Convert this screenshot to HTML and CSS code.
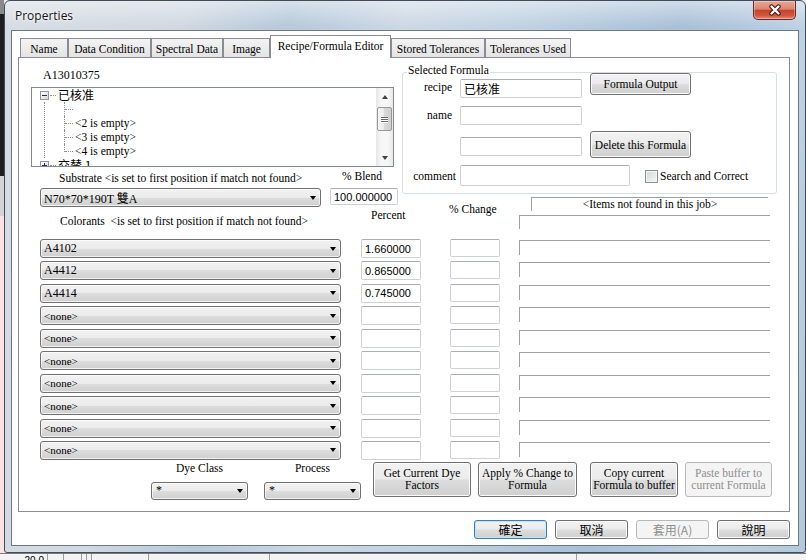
FILE: index.html
```html
<!DOCTYPE html>
<html>
<head>
<meta charset="utf-8">
<title>Properties</title>
<link rel="stylesheet" href="styles.css">
</head>
<body>
<div class="window">
  <div class="titlebar">
    <span class="title">Properties</span>
    <div class="close">
      <svg width="14" height="12" viewBox="0 0 14 12"><path d="M3.5 2.5 L10.5 9.5 M10.5 2.5 L3.5 9.5" stroke="#4a130c" stroke-width="4.4" stroke-linecap="round"/><path d="M3.5 2.5 L10.5 9.5 M10.5 2.5 L3.5 9.5" stroke="#ffffff" stroke-width="2.4" stroke-linecap="round"/></svg>
    </div>
  </div>
  <div class="client">
    <div class="tabs">
      <div class="tab t1">Name</div>
      <div class="tab t2">Data Condition</div>
      <div class="tab t3">Spectral Data</div>
      <div class="tab t4">Image</div>
      <div class="tab sel t5">Recipe/Formula Editor</div>
      <div class="tab t6">Stored Tolerances</div>
      <div class="tab t7">Tolerances Used</div>
    </div>
    <div class="panel">
      <div class="top">
        <div class="left">
          <div class="jobid">A13010375</div>
          <div class="tree">
            <div class="tree-body">
              <div class="trow"><span class="tbox"></span><span class="hdots"></span><span class="ttext cjk">已核准</span></div>
              <div class="tchildren">
                <div class="trow"><span class="conn"></span></div>
                <div class="trow"><span class="conn"></span><span class="ttext">&lt;2 is empty&gt;</span></div>
                <div class="trow"><span class="conn"></span><span class="ttext">&lt;3 is empty&gt;</span></div>
                <div class="trow"><span class="conn last"></span><span class="ttext">&lt;4 is empty&gt;</span></div>
              </div>
              <div class="trow"><span class="tbox plus"></span><span class="hdots"></span><span class="ttext cjk">交替 1</span></div>
            </div>
            <div class="sb">
              <div class="sb-btn"><i class="tri-up"></i></div>
              <div class="thumb"><i></i><i></i><i></i></div>
              <div class="sb-btn dn"><i class="tri-dn"></i></div>
            </div>
          </div>
          <div class="sub-head">
            <span class="sub-label">Substrate &lt;is set to first position if match not found&gt;</span>
            <span class="blend-label">% Blend</span>
          </div>
          <div class="sub-row">
            <div class="combo sub-combo"><span>N70*70*190T 雙A</span><i class="arr"></i></div>
            <div class="tb blend">100.000000</div>
          </div>
          <div class="col-head">
            <span class="col-label">Colorants  &lt;is set to first position if match not found&gt;</span>
            <span class="pct-label">Percent</span>
          </div>
        </div>
        <div class="right">
          <div class="group">
            <span class="legend">Selected Formula</span>
            <div class="grow">
              <span class="glabel r1">recipe</span>
              <div class="tb gin r1in"><span class="cjk">已核准</span></div>
              <div class="btn fbtn r1btn">Formula Output</div>
            </div>
            <div class="grow">
              <span class="glabel r2">name</span>
              <div class="tb gin r2in"></div>
            </div>
            <div class="grow">
              <span class="glabel"></span>
              <div class="tb gin r3in"></div>
              <div class="btn fbtn r3btn">Delete this Formula</div>
            </div>
            <div class="grow">
              <span class="glabel r4">comment</span>
              <div class="tb gin wide"></div>
              <span class="chk"></span>
              <span class="chk-label">Search and Correct</span>
            </div>
          </div>
          <div class="nf-row">
            <span class="chg-label">% Change</span>
            <div class="nf-col">
              <div class="nf-head">&lt;Items not found in this job&gt;</div>
              <div class="nf"></div>
            </div>
          </div>
        </div>
      </div>

      <div class="rows">
        <div class="combo"><span>A4102</span><i class="arr"></i></div><div class="tb pct">1.660000</div><div class="tb chg"></div><div class="nf"></div>
        <div class="combo"><span>A4412</span><i class="arr"></i></div><div class="tb pct">0.865000</div><div class="tb chg"></div><div class="nf"></div>
        <div class="combo"><span>A4414</span><i class="arr"></i></div><div class="tb pct">0.745000</div><div class="tb chg"></div><div class="nf"></div>
        <div class="combo"><span class="none">&lt;none&gt;</span><i class="arr"></i></div><div class="tb pct"></div><div class="tb chg"></div><div class="nf"></div>
        <div class="combo"><span class="none">&lt;none&gt;</span><i class="arr"></i></div><div class="tb pct"></div><div class="tb chg"></div><div class="nf"></div>
        <div class="combo"><span class="none">&lt;none&gt;</span><i class="arr"></i></div><div class="tb pct"></div><div class="tb chg"></div><div class="nf"></div>
        <div class="combo"><span class="none">&lt;none&gt;</span><i class="arr"></i></div><div class="tb pct"></div><div class="tb chg"></div><div class="nf"></div>
        <div class="combo"><span class="none">&lt;none&gt;</span><i class="arr"></i></div><div class="tb pct"></div><div class="tb chg"></div><div class="nf"></div>
        <div class="combo"><span class="none">&lt;none&gt;</span><i class="arr"></i></div><div class="tb pct"></div><div class="tb chg"></div><div class="nf"></div>
        <div class="combo"><span class="none">&lt;none&gt;</span><i class="arr"></i></div><div class="tb pct"></div><div class="tb chg"></div><div class="nf"></div>
      </div>

      <div class="bottom">
        <div class="sel-grp">
          <span class="lbl">Dye Class</span>
          <div class="combo"><span>*</span><i class="arr"></i></div>
        </div>
        <div class="sel-grp proc">
          <span class="lbl">Process</span>
          <div class="combo"><span>*</span><i class="arr"></i></div>
        </div>
        <div class="btn bb bb1">Get Current Dye<br>Factors</div>
        <div class="btn bb bb2">Apply % Change to<br>Formula</div>
        <div class="btn bb bb3">Copy current<br>Formula to buffer</div>
        <div class="btn bb bb4 dis">Paste buffer to<br>current Formula</div>
      </div>
    </div>
    <div class="dlg">
      <div class="btn dbtn def">確定</div>
      <div class="btn dbtn">取消</div>
      <div class="btn dbtn dis">套用(A)</div>
      <div class="btn dbtn">說明</div>
    </div>
  </div>
</div>
<div class="footer">
  <span class="c1">20.0</span><span class="c2"></span><span class="c3"></span><span class="c4"></span><span class="c5"></span><span class="c6"></span><span class="c7"></span><span class="c8"></span>
</div>
</body>
</html>
```
FILE: styles.css
```css
* { box-sizing: border-box; }
html, body { margin: 0; padding: 0; }
body {
  width: 806px;
  height: 560px;
  overflow: hidden;
  display: flex;
  flex-direction: column;
  background:
    linear-gradient(#8a8a8a 0, #8a8a8a 14px, #1e1e1e 14px, #1e1e1e 176px, #d4d4d4 176px, #d4d4d4 216px, #fbe3e3 216px) 0 0 / 4px 100% no-repeat,
    #ececec;
  font-family: "Liberation Serif", "Noto Sans CJK TC", serif;
  font-size: 11.5px;
  color: #000;
}

/* window frame */
.window {
  flex: none;
  margin-left: 4px;
  width: 802px;
  height: 553px;
  border: 1px solid #3e4c5b;
  border-radius: 6px 6px 3px 3px;
  padding: 0 6px 6px;
  display: flex;
  flex-direction: column;
  background:
    linear-gradient(rgba(255,255,255,.45), rgba(255,255,255,0) 26px),
    linear-gradient(100deg, #d6dce3 0%, #d0d8e1 20%, #b6c8da 32%, #ccd8e4 45%, #c0d1e2 58%, #a8bfd7 76%, #bed1e4 90%, #b4c8dc 100%);
}
.titlebar { flex: none; height: 29px; display: flex; align-items: flex-start; }
.title {
  font-family: "Open Sans", sans-serif;
  font-size: 12px;
  line-height: 16px;
  margin: 7px 0 0 4px;
  color: #141414;
  text-shadow: 0 0 5px #fff, 0 0 3px #fff;
}
.close {
  margin-left: auto;
  margin-right: 3px;
  width: 43px;
  height: 19px;
  border: 1px solid #6a2a22;
  border-top: none;
  border-radius: 0 0 5px 5px;
  background: linear-gradient(#e9a897 0%, #dc8470 45%, #c7442c 52%, #cf553d 80%, #e58d76 100%);
  box-shadow: inset 0 0 0 1px rgba(255,255,255,.3);
  display: flex;
  align-items: center;
  justify-content: center;
}
.client {
  flex: 1;
  background: #fff;
  border: 1px solid #6a7888;
  display: flex;
  flex-direction: column;
}

/* tabs */
.tabs { flex: none; display: flex; align-items: flex-end; height: 22px; margin: 4px 0 0 8px; }
.tab {
  flex: none;
  height: 19px;
  border: 1px solid #898c95;
  border-bottom: none;
  background: linear-gradient(#f3f3f3, #e4e4e4);
  display: flex;
  align-items: center;
  justify-content: center;
  white-space: nowrap;
  padding-top: 1px;
}
.tab.sel { height: 23px; margin-bottom: -1px; background: #fff; position: relative; z-index: 2; padding: 0 0 3px; }
.t1 { width: 48px; }
.t2 { width: 83px; }
.t3 { width: 72px; }
.t4 { width: 47px; }
.t5 { width: 121px; }
.t6 { width: 94px; }
.t7 { width: 86px; }

.panel {
  flex: none;
  margin-left: 6px;
  width: 772px;
  height: 455px;
  border: 1px solid #898c95;
  background: #fff;
  position: relative;
  z-index: 1;
}

/* top section */
.top { display: flex; }
.left { flex: none; margin-left: 12px; width: 368px; }
.jobid { margin-top: 10px; padding-left: 12px; line-height: 14px; font-size: 12px; }

.tree { margin-top: 5px; width: 363px; height: 80px; border: 1px solid #828790; display: flex; overflow: hidden; }
.tree-body { flex: 1; padding-left: 8px; overflow: hidden; }
.trow { height: 14px; display: flex; align-items: center; white-space: nowrap; }
.tbox {
  flex: none;
  width: 9px;
  height: 9px;
  border: 1px solid #969696;
  background: linear-gradient(135deg, #fff, #d8d8d8);
  position: relative;
}
.tbox::before { content: ""; position: absolute; left: 1px; top: 3px; width: 5px; height: 1px; background: #1b2f5a; }
.tbox.plus::after { content: ""; position: absolute; left: 3px; top: 1px; width: 1px; height: 5px; background: #1b2f5a; }
.hdots { flex: none; width: 6px; border-top: 1px dotted #8f8f8f; margin-left: 1px; }
.ttext { margin-left: 2px; line-height: 14px; }
.cjk { font-family: "Noto Sans CJK TC", sans-serif; font-size: 12px; }
.tchildren { margin-left: 4px; border-left: 1px dotted #8f8f8f; padding-left: 19px; }
.conn {
  flex: none;
  align-self: flex-start;
  width: 9px;
  height: 14px;
  border-left: 1px dotted #8f8f8f;
  display: flex;
  align-items: center;
}
.conn::after { content: ""; width: 8px; border-top: 1px dotted #8f8f8f; }
.conn.last { height: 8px; align-items: flex-end; }

.sb {
  flex: none;
  width: 17px;
  display: flex;
  flex-direction: column;
  align-items: center;
  background: linear-gradient(to right, #e6e6e6, #f7f7f7 30%, #f7f7f7 70%, #e8e8e8);
}
.sb-btn { flex: none; height: 17px; width: 100%; display: flex; align-items: center; justify-content: center; }
.sb-btn.dn { margin-top: auto; }
.tri-up { width: 0; height: 0; border-left: 3.5px solid transparent; border-right: 3.5px solid transparent; border-bottom: 4px solid #404040; }
.tri-dn { width: 0; height: 0; border-left: 3.5px solid transparent; border-right: 3.5px solid transparent; border-top: 4px solid #404040; }
.thumb {
  flex: none;
  margin-top: 2px;
  width: 15px;
  height: 24px;
  border: 1px solid #979797;
  border-radius: 2px;
  background: linear-gradient(to right, #f5f5f5, #e9e9e9 50%, #d8d8d8 50%, #cfcfcf);
  display: flex;
  flex-direction: column;
  align-items: center;
  justify-content: center;
  gap: 1px;
}
.thumb i { width: 7px; height: 1px; background: #6a6a6a; box-shadow: 0 1px 0 #fff; }

.sub-head { display: flex; margin-top: 4px; height: 14px; }
.sub-label { flex: none; width: 311px; padding-left: 28px; line-height: 14px; white-space: nowrap; }
.blend-label { line-height: 14px; margin-top: -2px; white-space: nowrap; }
.sub-row { display: flex; margin-top: 3px; }

.combo {
  flex: none;
  display: flex;
  align-items: center;
  height: 19px;
  border: 1px solid #707070;
  border-radius: 3px;
  background: linear-gradient(#f2f2f2 0%, #ebebeb 50%, #dddddd 50%, #cfcfcf 100%);
  box-shadow: inset 0 0 0 1px rgba(255,255,255,.7);
  padding-left: 3px;
  font-size: 12px;
  white-space: nowrap;
}
.combo .arr {
  margin-left: auto;
  margin-right: 4px;
  width: 0;
  height: 0;
  border-left: 3.5px solid transparent;
  border-right: 3.5px solid transparent;
  border-top: 4px solid #000;
}
.none { font-size: 11px; }
.sub-combo { margin-left: 9px; width: 281px; }

.tb {
  flex: none;
  border: 1px solid #cdd1d6;
  border-top-color: #abadb3;
  border-radius: 2px;
  background: #fff;
  font-family: "Liberation Sans", sans-serif;
  font-size: 11px;
  padding-left: 3px;
  display: flex;
  align-items: center;
  white-space: nowrap;
}
.blend { margin-left: 9px; width: 68px; height: 17px; }

.col-head { display: flex; }
.col-label { flex: none; width: 340px; padding-left: 29px; margin-top: 7px; line-height: 14px; white-space: pre; }
.pct-label { margin-top: 1px; line-height: 14px; white-space: nowrap; }

/* selected formula group */
.right { flex: none; margin-left: 3px; width: 375px; }
.group { margin-top: 14px; height: 122px; border: 1px solid #d5dfe5; border-radius: 3px; position: relative; }
.legend { position: absolute; left: 4px; top: -9px; padding: 0 1px; background: #fff; line-height: 12px; white-space: nowrap; }
.grow { display: flex; align-items: flex-start; }
.glabel { flex: none; width: 54px; padding-right: 5px; text-align: right; line-height: 16px; white-space: nowrap; }
.glabel.r1 { margin-top: 6px; }
.glabel.r2 { margin-top: 9px; }
.glabel.r4 { margin-top: 10px; padding-right: 1px; }
.gin { margin-left: 3px; width: 122px; height: 19px; }
.r1in { margin-top: 6px; }
.r2in { margin-top: 8px; }
.r3in { margin-top: 12px; }
.gin.wide { width: 170px; height: 21px; margin-top: 7px; }
.fbtn { margin-left: 8px; width: 101px; }
.r1btn { height: 22px; }
.r3btn { height: 27px; margin-top: 6px; }
.chk {
  flex: none;
  margin: 12px 0 0 15px;
  width: 13px;
  height: 13px;
  border: 1px solid #8e8f8f;
  background: linear-gradient(135deg, #d4d6d9, #f7f7f7);
  box-shadow: inset 0 0 0 1px #f4f4f4;
}
.chk-label { margin: 10px 0 0 2px; line-height: 16px; white-space: nowrap; }

.nf-row { display: flex; margin-top: 3px; }
.chg-label { flex: none; margin-left: 47px; width: 48px; margin-top: 5px; line-height: 14px; white-space: nowrap; }
.nf-col { margin-left: 22px; }
.nf-head {
  margin-left: 12px;
  width: 237px;
  height: 14px;
  border-top: 1px solid #a0a0a0;
  border-left: 1px solid #a0a0a0;
  text-align: center;
  line-height: 12px;
  white-space: nowrap;
}
.nf { width: 251px; height: 14px; border-top: 1px solid #a0a0a0; border-left: 1px solid #a0a0a0; }
.nf-col .nf { margin-top: 4px; }

/* colorant rows */
.rows {
  display: grid;
  grid-template-columns: 321px 89px 69px 251px;
  grid-auto-rows: 19px;
  row-gap: 3.44px;
  margin: 10px 0 0 21px;
}
.rows .combo { width: 301px; }
.pct { width: 60px; height: 19px; }
.chg { width: 50px; height: 18px; }
.rows .nf { height: 15px; margin-top: 1px; }

/* bottom controls */
.bottom { display: flex; margin-left: 132px; }
.sel-grp { flex: none; width: 97px; display: flex; flex-direction: column; }
.sel-grp .lbl { margin-top: 1px; line-height: 14px; text-align: center; }
.sel-grp .combo { margin-top: 7px; width: 97px; height: 18px; padding-left: 4px; }
.proc { margin-left: 16px; }

.btn {
  flex: none;
  border: 1px solid #707070;
  border-radius: 3px;
  background: linear-gradient(#f2f2f2 0%, #ebebeb 49%, #dddddd 51%, #cfcfcf 100%);
  box-shadow: inset 0 0 0 1px #fbfbfb;
  display: flex;
  align-items: center;
  justify-content: center;
  text-align: center;
  white-space: nowrap;
  line-height: 12px;
}
.bb { margin-top: 2px; height: 35px; }
.bb1 { margin-left: 12px; width: 98px; }
.bb2 { margin-left: 7px; width: 99px; }
.bb3 { margin-left: 13px; width: 88px; }
.bb4 { margin-left: 7px; width: 87px; }
.btn.dis { border-color: #b5b9bc; background: #f4f4f4; color: #8e8e8e; box-shadow: none; }

/* dialog buttons */
.dlg { flex: none; display: flex; justify-content: flex-end; gap: 8px; margin-top: 8px; padding-right: 8px; }
.dbtn { width: 73px; height: 19px; font-family: "Noto Sans CJK TC", sans-serif; font-size: 12px; line-height: 16px; }
.dbtn.def { border-color: #3c7fb1; box-shadow: inset 0 0 0 1px #bfe4f8; }

/* desktop strip below the window */
.footer {
  flex: none;
  height: 7px;
  display: flex;
  background: #f3f3f3;
  border-top: 1px solid #7a7a7a;
  overflow: hidden;
  font-family: "Liberation Sans", sans-serif;
  font-size: 10px;
  line-height: 13px;
}
.footer span { flex: none; border-right: 1px solid #9a9a9a; height: 100%; }
.c1 { width: 48px; text-align: right; padding-right: 3px; }
.c2 { width: 16px; }
.c3 { width: 18px; }
.c4 { width: 5px; }
.c5 { width: 5px; }
.c6 { width: 57px; }
.c7 { width: 121px; }
.c8 { width: 307px; }
```
